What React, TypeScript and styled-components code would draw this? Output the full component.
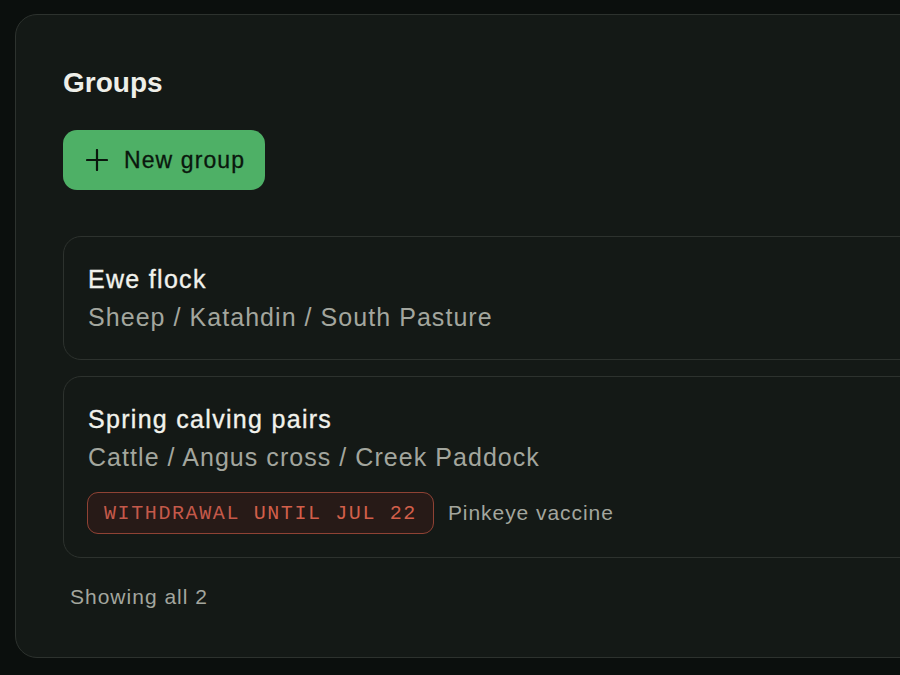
import React from "react";
import styled, { createGlobalStyle } from "styled-components";

const GlobalStyle = createGlobalStyle`
  html, body {
    margin: 0;
    padding: 0;
    background: #0b0f0d;
    overflow: hidden;
  }
  * { box-sizing: border-box; }
`;

const Page = styled.div`
  width: 900px;
  height: 675px;
  overflow: hidden;
  padding: 14px 0 0 15px;
  font-family: "Liberation Sans", Arial, sans-serif;
`;

const Panel = styled.section`
  width: 1000px;
  height: 644px;
  background: #141916;
  border: 1px solid #2d322e;
  border-radius: 22px;
  padding: 49px 0 0 47px;
  display: flex;
  flex-direction: column;
  align-items: flex-start;
`;

const Heading = styled.h1`
  margin: 0;
  font-size: 28px;
  line-height: 38px;
  font-weight: 700;
  color: #eeefe9;
`;

const PrimaryButton = styled.button`
  margin-top: 28px;
  height: 60px;
  display: flex;
  align-items: center;
  gap: 16px;
  padding: 0 20px 0 23px;
  background: #4eb066;
  color: #0a170d;
  border: none;
  border-radius: 14px;
  font-family: inherit;
  font-size: 23px;
  letter-spacing: 1.1px;
  -webkit-text-stroke: 0.3px currentColor;
  cursor: pointer;
`;

const List = styled.div`
  margin-top: 46px;
  width: 100%;
  display: flex;
  flex-direction: column;
  gap: 16px;
`;

const Card = styled.article`
  border: 1px solid #2d322e;
  border-radius: 18px;
  padding: 23px 24px;
  display: flex;
  flex-direction: column;
`;

const Title = styled.div`
  font-size: 25px;
  line-height: 38px;
  letter-spacing: 1.3px;
  color: #f1f2ec;
  -webkit-text-stroke: 0.35px currentColor;
`;

const Meta = styled.div`
  font-size: 25px;
  line-height: 38px;
  letter-spacing: 1.05px;
  color: #a3a69e;
`;

const NoticeRow = styled.div`
  margin-top: 16px;
  display: flex;
  align-items: center;
  gap: 14px;
`;

const Badge = styled.span`
  height: 42px;
  margin-left: -1px;
  display: inline-flex;
  align-items: center;
  padding: 0 16px;
  background: #271a17;
  border: 1.5px solid #8f4234;
  border-radius: 11px;
  font-family: "Liberation Mono", "DejaVu Sans Mono", monospace;
  font-size: 20px;
  letter-spacing: 1.6px;
  color: #d25f4a;
  text-transform: uppercase;
`;

const BadgeLead = styled.span`
  color: #c4594a;
`;

const NoticeText = styled.span`
  font-size: 21px;
  letter-spacing: 0.95px;
  color: #a3a69e;
`;

const Footer = styled.div`
  margin-top: 24px;
  padding-left: 7px;
  font-size: 21px;
  line-height: 30px;
  letter-spacing: 1px;
  color: #a3a69e;
`;

const PlusIcon = () => (
  <svg width="22" height="22" viewBox="0 0 22 22" fill="none">
    <path d="M11 1v20M1 11h20" stroke="currentColor" strokeWidth="2.2" strokeLinecap="round" />
  </svg>
);

type Group = {
  name: string;
  path: string;
  withdrawal?: { until: string; reason: string };
};

const groups: Group[] = [
  { name: "Ewe flock", path: "Sheep / Katahdin / South Pasture" },
  {
    name: "Spring calving pairs",
    path: "Cattle / Angus cross / Creek Paddock",
    withdrawal: { until: "Jul 22", reason: "Pinkeye vaccine" },
  },
];

export default function App() {
  return (
    <>
      <GlobalStyle />
      <Page>
        <Panel>
          <Heading>Groups</Heading>
          <PrimaryButton>
            <PlusIcon />
            New group
          </PrimaryButton>
          <List>
            {groups.map((g) => (
              <Card key={g.name}>
                <Title>{g.name}</Title>
                <Meta>{g.path}</Meta>
                {g.withdrawal && (
                  <NoticeRow>
                    <Badge>
                      <BadgeLead>Withdrawal</BadgeLead>&nbsp;until {g.withdrawal.until}
                    </Badge>
                    <NoticeText>{g.withdrawal.reason}</NoticeText>
                  </NoticeRow>
                )}
              </Card>
            ))}
          </List>
          <Footer>Showing all {groups.length}</Footer>
        </Panel>
      </Page>
    </>
  );
}
